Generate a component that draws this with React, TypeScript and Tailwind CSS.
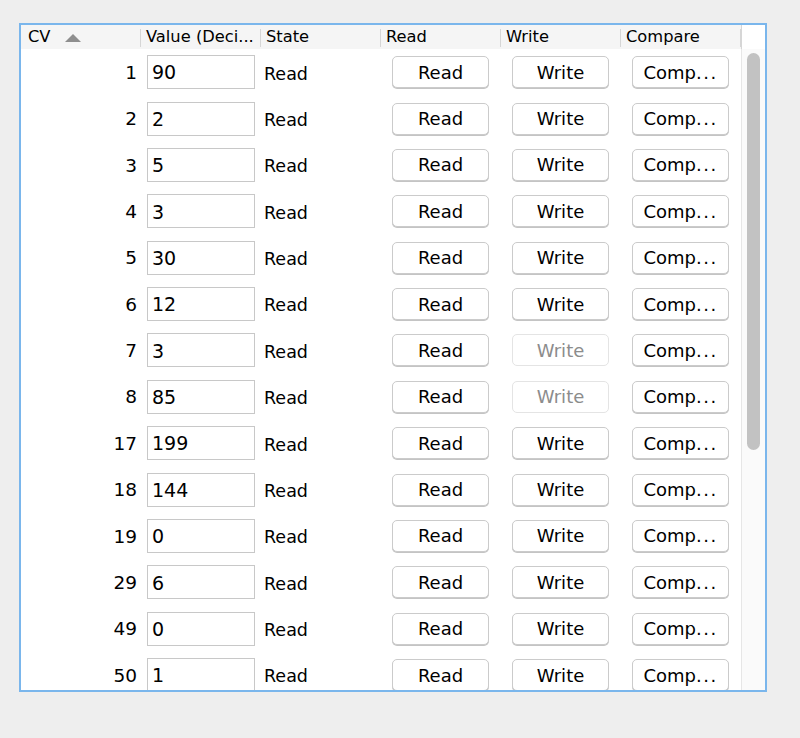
const rows: { cv: number; value: string; writeDisabled?: boolean }[] = [
  { cv: 1, value: '90' },
  { cv: 2, value: '2' },
  { cv: 3, value: '5' },
  { cv: 4, value: '3' },
  { cv: 5, value: '30' },
  { cv: 6, value: '12' },
  { cv: 7, value: '3', writeDisabled: true },
  { cv: 8, value: '85', writeDisabled: true },
  { cv: 17, value: '199' },
  { cv: 18, value: '144' },
  { cv: 19, value: '0' },
  { cv: 29, value: '6' },
  { cv: 49, value: '0' },
  { cv: 50, value: '1' },
]

const headers = ['Value (Deci...', 'State', 'Read', 'Write', 'Compare']

function Sep() {
  return <div className="ml-auto w-px h-[18px] bg-[#d6d6d6]" />
}

function Btn({ label, disabled }: { label: React.ReactNode; disabled?: boolean }) {
  return (
    <button
      className={
        'ml-[11px] w-[97px] h-[32px] rounded-[5px] bg-white border flex items-center justify-center text-[18px] ' +
        (disabled
          ? 'border-[#e4e4e4] text-[#8c8c8c]'
          : 'border-[#cbcbcb] text-black shadow-[0_1px_0_#c4c4c4]')
      }
    >
      {label}
    </button>
  )
}

export default function App() {
  return (
    <div
      className="w-[800px] h-[738px] bg-[#eeeeee] pl-[19px] pt-[23px]"
      style={{ fontFamily: '"DejaVu Sans", "Liberation Sans", sans-serif' }}
    >
      <div className="w-[748px] h-[669px] border-2 border-[#7ab6ec] bg-white flex overflow-hidden">
        <div className="w-[720px] flex flex-col">
          {/* header */}
          <div className="h-[24px] bg-[#f5f5f5] flex items-center text-[16.3px] text-black shrink-0 pt-[1px]">
            <div className="w-[120px] flex items-center pl-[7px]">
              <span>CV</span>
              <svg className="ml-[14px]" width="16" height="8" viewBox="0 0 16 8">
                <polygon points="8,0 16,8 0,8" fill="#8e8e8e" />
              </svg>
              <Sep />
            </div>
            {headers.map((h) => (
              <div key={h} className="w-[120px] flex items-center pl-[5px] whitespace-nowrap">
                <span>{h}</span>
                <Sep />
              </div>
            ))}
          </div>
          {/* body */}
          <div className="flex-1 overflow-hidden">
            {rows.map((r) => (
              <div key={r.cv} className="h-[46.38px] flex items-center text-[18.5px] text-black">
                <div className="w-[120px] text-right pr-[4px] pt-[1px]">{r.cv}</div>
                <div className="w-[120px] pl-[6px]">
                  <div className="w-[108px] h-[34px] border border-[#c8c8c8] bg-white flex items-center pl-[4px] text-[19px] pt-[1px]">
                    {r.value}
                  </div>
                </div>
                <div className="w-[120px] pl-[3px] text-[17.5px] pt-[3px]">Read</div>
                <div className="w-[120px]">
                  <Btn label="Read" />
                </div>
                <div className="w-[120px]">
                  <Btn label="Write" disabled={r.writeDisabled} />
                </div>
                <div className="w-[120px]">
                  <Btn
                    label={
                      <>
                        Comp<span className="tracking-[1.5px]">...</span>
                      </>
                    }
                  />
                </div>
              </div>
            ))}
          </div>
        </div>
        {/* scrollbar */}
        <div className="w-[24px] flex flex-col">
          <div className="h-[24px] bg-white border-l border-[#d6d6d6] shrink-0" />
          <div className="flex-1 bg-[#fafafa] border-l border-[#e6e6e6] pl-[5px] pt-[4px]">
            <div className="w-[13px] h-[397px] rounded-full bg-[#c2c2c2]" />
          </div>
        </div>
      </div>
    </div>
  )
}
